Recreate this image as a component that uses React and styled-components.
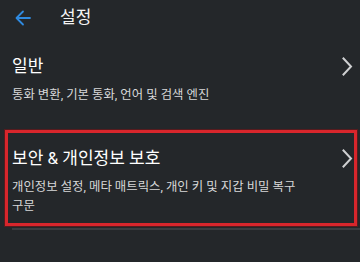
import styled, { createGlobalStyle } from "styled-components";

// Экран настроек (Settings) — тёмная тема

const GlobalStyle = createGlobalStyle`
  html, body {
    margin: 0;
    padding: 0;
    background: #24272a;
  }
  * {
    box-sizing: border-box;
  }
`;

const items = [
  {
    id: "general",
    title: "일반",
    subtitle: "통화 변환, 기본 통화, 언어 및 검색 엔진",
  },
  {
    id: "security",
    title: "보안 & 개인정보 보호",
    subtitle: "개인정보 설정, 메타 매트릭스, 개인 키 및 지갑 비밀 복구 구문",
    highlighted: true,
  },
  {
    id: "advanced",
    title: "고급",
  },
];

export default function App() {
  return (
    <>
      <GlobalStyle />
      <Screen>
        <Header>
          <BackBtn aria-label="back">
            <svg width="16" height="16" viewBox="0 0 16 16" fill="none">
              <path
                d="M15 8H2M8 1.5L1.5 8L8 14.5"
                stroke="#2f8ae0"
                strokeWidth="1.8"
                strokeLinecap="round"
                strokeLinejoin="round"
              />
            </svg>
          </BackBtn>
          <HeaderTitle>설정</HeaderTitle>
        </Header>

        <List>
          {items.map((item) => (
            <SettingItem key={item.id} {...item} />
          ))}
        </List>
      </Screen>
    </>
  );
}

const SettingItem = (props) => {
  const { title, subtitle, highlighted } = props;
  return (
    <>
      <Item $highlighted={highlighted}>
        <TitleRow>
          <Title>{title}</Title>
          <Chevron width="11" height="19" viewBox="0 0 11 19" fill="none">
            <path
              d="M1.5 1.5L9 9.5L1.5 17.5"
              stroke="#cfd0d2"
              strokeWidth="2"
              strokeLinecap="square"
            />
          </Chevron>
        </TitleRow>
        {subtitle && <Subtitle>{subtitle}</Subtitle>}
      </Item>
      {highlighted && <Divider />}
    </>
  );
};

//todo ---- styles

const Screen = styled.div`
  width: 360px;
  height: 262px;
  overflow: hidden;
  background: #24272a;
  font-family: Roboto, "Noto Sans CJK KR", sans-serif;
  color: #ffffff;
`;

const Header = styled.div`
  display: flex;
  align-items: center;
  height: 34px;
  padding-left: 15px;
`;

const BackBtn = styled.div`
  display: flex;
  align-items: center;
  width: 16px;
  height: 16px;
  margin-top: 1px;
`;

const HeaderTitle = styled.div`
  margin-left: 29px;
  font-size: 17px;
  font-weight: 400;
  line-height: 22px;
  color: #f4f4f4;
`;

const List = styled.div`
  display: flex;
  flex-direction: column;
`;

const Item = styled.div`
  display: flex;
  flex-direction: column;
  margin: ${(p) => (p.$highlighted ? "4px 3px 0 5px" : "0")};
  border: ${(p) => (p.$highlighted ? "3px solid #d8262c" : "none")};
  box-shadow: ${(p) =>
    p.$highlighted ? "0 0 0 1px rgba(120, 20, 24, 0.6)" : "none"};
  padding: ${(p) =>
    p.$highlighted ? "13px 1px 8px 4px" : "20px 7px 22px 12px"};
`;

const TitleRow = styled.div`
  display: flex;
  justify-content: space-between;
  align-items: center;
  height: 24px;
`;

const Title = styled.div`
  font-size: 17px;
  font-weight: 400;
  line-height: 24px;
  color: #ffffff;
`;

const Chevron = styled.svg`
  flex-shrink: 0;
`;

const Subtitle = styled.div`
  margin-top: 7px;
  padding-right: 38px;
  font-size: 12.4px;
  line-height: 19px;
  color: #d7d8d9;
  word-break: keep-all;
`;

const Divider = styled.div`
  height: 2px;
  margin: 2px 0 0 12px;
  background: #3a3d41;
  margin-bottom: 20px;
`;
